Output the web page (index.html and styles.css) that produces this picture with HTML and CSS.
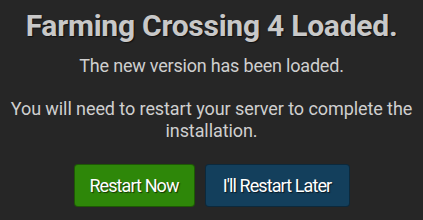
FILE: index.html
```html
<!DOCTYPE html>
<html lang="en">
<head>
  <meta charset="UTF-8" />
  <title>Farming Crossing 4 Loaded</title>
  <link rel="stylesheet" href="styles.css">
</head>
<body>

<div class="dialog">
  <h1 class="title">Farming Crossing 4 Loaded.</h1>

  <p class="subtitle">The new version has been loaded.</p>

  <p class="notice">You will need to restart your server to complete the installation.</p>

  <div class="actions">
    <button class="btn btn-now">Restart Now</button>
    <button class="btn btn-later">I'll Restart Later</button>
  </div>
</div>

</body>
</html>
```

FILE: styles.css
```css
body {
  font-family: Roboto, "Liberation Sans", sans-serif;
  background: #262626;
  color: #cfcfcf;
  margin: 0;
  padding: 0;
}

.dialog {
  padding: 8px 6px 0;
  text-align: center;
}

.title {
  margin: 0;
  font-size: 30px;
  line-height: 36px;
  letter-spacing: -0.25px;
  font-weight: bold;
  color: #c8c8c8;
  text-shadow: 1px 1px 1px #111;
}

.subtitle {
  margin: 11px 0 0;
  font-size: 18px;
  line-height: 22px;
  letter-spacing: -0.2px;
}

.notice {
  margin: 21px 0 0;
  font-size: 18px;
  line-height: 22px;
  letter-spacing: -0.08px;
}

.actions {
  display: flex;
  justify-content: center;
  gap: 10px;
  margin-top: 22px;
}

.btn {
  font-family: inherit;
  font-size: 18px;
  letter-spacing: -0.9px;
  color: #fff;
  white-space: nowrap;
  border: 1px solid rgba(0, 0, 0, 0.35);
  border-radius: 4px;
  padding: 0;
  height: 43px;
  cursor: pointer;
  text-shadow: 1px 1px 1px rgba(0, 0, 0, 0.6);
}

.btn-now {
  background: #2e8709;
  width: 121px;
}

.btn-later {
  background: #133f5c;
  width: 145px;
}
```
